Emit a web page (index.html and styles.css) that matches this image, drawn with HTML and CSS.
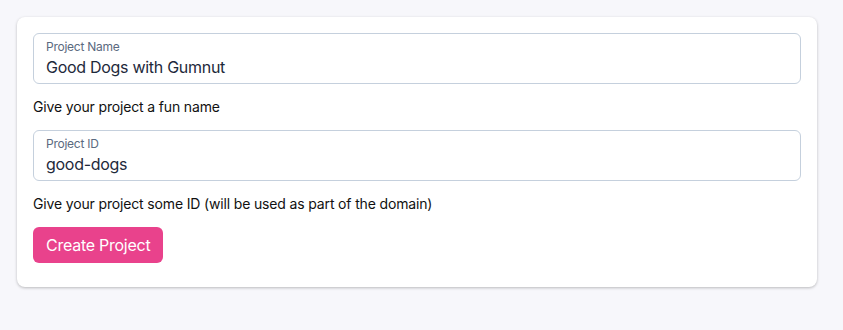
FILE: index.html
```html
<!DOCTYPE html>
<html lang="en">
<head>
  <meta charset="UTF-8">
  <meta name="viewport" content="width=device-width, initial-scale=1.0">
  <title>New Project</title>
  <link rel="stylesheet" href="styles.css">
</head>
<body>

  <div class="project-card">
    <form id="projectForm">
      <div class="field">
        <label class="field-box" for="projectName">
          <span class="field-label">Project Name</span>
          <input type="text" id="projectName" value="Good Dogs with Gumnut">
        </label>
        <p class="field-help">Give your project a fun name</p>
      </div>

      <div class="field">
        <label class="field-box" for="projectId">
          <span class="field-label">Project ID</span>
          <input type="text" id="projectId" value="good-dogs">
        </label>
        <p class="field-help">Give your project some ID (will be used as part of the domain)</p>
      </div>

      <button type="submit" class="create-button">Create Project</button>
    </form>
  </div>

</body>
</html>
```

FILE: styles.css
```css
* {
  margin: 0;
  padding: 0;
  box-sizing: border-box;
}

body {
  font-family: Inter, 'Liberation Sans', Arial, sans-serif;
  letter-spacing: -0.016em;
  background: #f7f7fb;
  padding: 17px;
}

.project-card {
  width: 800px;
  background: #fff;
  border-radius: 8px;
  padding: 16px 16px 24px;
  box-shadow: 0 1px 3px rgba(0, 0, 0, 0.25);
}

.field {
  margin-bottom: 12px;
}

.field-box {
  display: flex;
  flex-direction: column;
  height: 51px;
  padding: 5px 12px 0;
  border: 1px solid #c5d0dd;
  border-radius: 6px;
}

.field-label {
  font-size: 12px;
  line-height: 16px;
  color: #5b6a80;
}

.field-box input {
  border: none;
  outline: none;
  font-family: inherit;
  font-size: 16px;
  line-height: 24px;
  letter-spacing: -0.018em;
  color: #1e293b;
  background: transparent;
}

.field-help {
  margin-top: 12px;
  font-size: 14px;
  line-height: 22px;
  letter-spacing: -0.011em;
  color: #111;
}

.create-button {
  height: 36px;
  padding: 0 13px;
  background-color: #e9428c;
  border: none;
  border-radius: 6px;
  font-family: inherit;
  font-size: 16px;
  letter-spacing: -0.016em;
  color: white;
  cursor: pointer;
}
```
